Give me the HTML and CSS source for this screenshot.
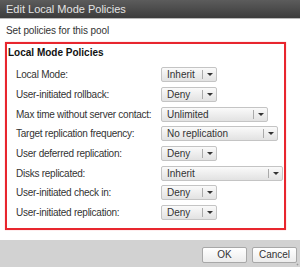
FILE: index.html
```html
<!DOCTYPE html>
<html>
<head>
    <link rel="stylesheet" href="styles.css">
</head>
<body>
    <div class="dialog">
        <div class="titlebar">Edit Local Mode Policies</div>

        <div class="content">
            <p class="intro">Set policies for this pool</p>

            <div class="policies">
                <h3>Local Mode Policies</h3>
                <div class="rows">
                    <div class="label">Local Mode:</div>
                    <div class="select small"><span class="val">Inherit</span><span class="arrow"></span></div>

                    <div class="label">User-initiated rollback:</div>
                    <div class="select small"><span class="val">Deny</span><span class="arrow"></span></div>

                    <div class="label">Max time without server contact:</div>
                    <div class="select medium"><span class="val">Unlimited</span><span class="arrow"></span></div>

                    <div class="label">Target replication frequency:</div>
                    <div class="select large"><span class="val">No replication</span><span class="arrow"></span></div>

                    <div class="label">User deferred replication:</div>
                    <div class="select small"><span class="val">Deny</span><span class="arrow"></span></div>

                    <div class="label">Disks replicated:</div>
                    <div class="select wide"><span class="val">Inherit</span><span class="arrow"></span></div>

                    <div class="label">User-initiated check in:</div>
                    <div class="select small"><span class="val">Deny</span><span class="arrow"></span></div>

                    <div class="label">User-initiated replication:</div>
                    <div class="select small"><span class="val">Deny</span><span class="arrow"></span></div>
                </div>
            </div>
        </div>

        <div class="footer">
            <button class="btn">OK</button>
            <button class="btn">Cancel</button>
            <span class="grip"></span>
        </div>
    </div>
</body>
</html>
```

FILE: styles.css
```css
body {
    margin: 0;
    font-family: "Liberation Sans", Arial, sans-serif;
    font-size: 10px;
    color: #333;
    background: #fff;
}

.dialog {
    width: 300px;
    height: 267px;
    display: flex;
    flex-direction: column;
    position: relative;
}

.titlebar {
    height: 18px;
    line-height: 18px;
    padding-left: 6px;
    font-size: 11px;
    color: #e4e4e4;
    background: linear-gradient(#5c5c5c, #3c3c3c);
    border-bottom: 1px solid #b8b8b8;
}

.content {
    flex: 1;
}

.intro {
    margin: 6px 0 0 6px;
    line-height: 12px;
    color: #333;
    letter-spacing: -0.1px;
}

.policies {
    margin: 5px 0 0 5px;
    width: 277px;
    height: 184px;
    border: 2px solid #e8262e;
    box-shadow: 0 0 1px #f79aa0;
}

.policies h3 {
    margin: 3px 0 0 1px;
    font-size: 10px;
    line-height: 12px;
    color: #111;
}

.rows {
    display: grid;
    grid-template-columns: 145px auto;
    grid-auto-rows: 19.7px;
    align-items: center;
    margin: 6px 0 0 9px;
}

.label {
    color: #333;
    letter-spacing: -0.25px;
}

.select {
    display: flex;
    align-items: center;
    height: 13px;
    border: 1px solid #c4c4c4;
    border-radius: 2px;
    background: linear-gradient(#fafafa, #e2e2e2);
    color: #333;
}

.select .val {
    flex: 1;
    padding-left: 5px;
    line-height: 13px;
}

.select .arrow {
    width: 13px;
    height: 9px;
    border-left: 1px solid #aaa;
    position: relative;
}

.select .arrow::after {
    content: "";
    position: absolute;
    left: 4px;
    top: 3px;
    border-left: 3px solid transparent;
    border-right: 3px solid transparent;
    border-top: 3px solid #333;
}

.small { width: 54px; }
.medium { width: 105px; }
.large { width: 115px; }
.wide { width: 120px; }

.footer {
    height: 27px;
    background: #d2d2d2;
    display: flex;
    justify-content: flex-end;
    align-items: center;
    gap: 5px;
    padding-right: 3px;
    position: relative;
}

.btn {
    width: 45px;
    height: 16px;
    margin-top: 2px;
    padding: 0;
    font-family: "Liberation Sans", Arial, sans-serif;
    font-size: 10px;
    color: #333;
    border: 1px solid #a8a8a8;
    border-radius: 2px;
    background: linear-gradient(#ffffff, #ececec);
}

.grip {
    position: absolute;
    right: 1px;
    bottom: 1px;
    width: 3px;
    height: 3px;
    background: radial-gradient(#999 40%, transparent 50%);
}
```
